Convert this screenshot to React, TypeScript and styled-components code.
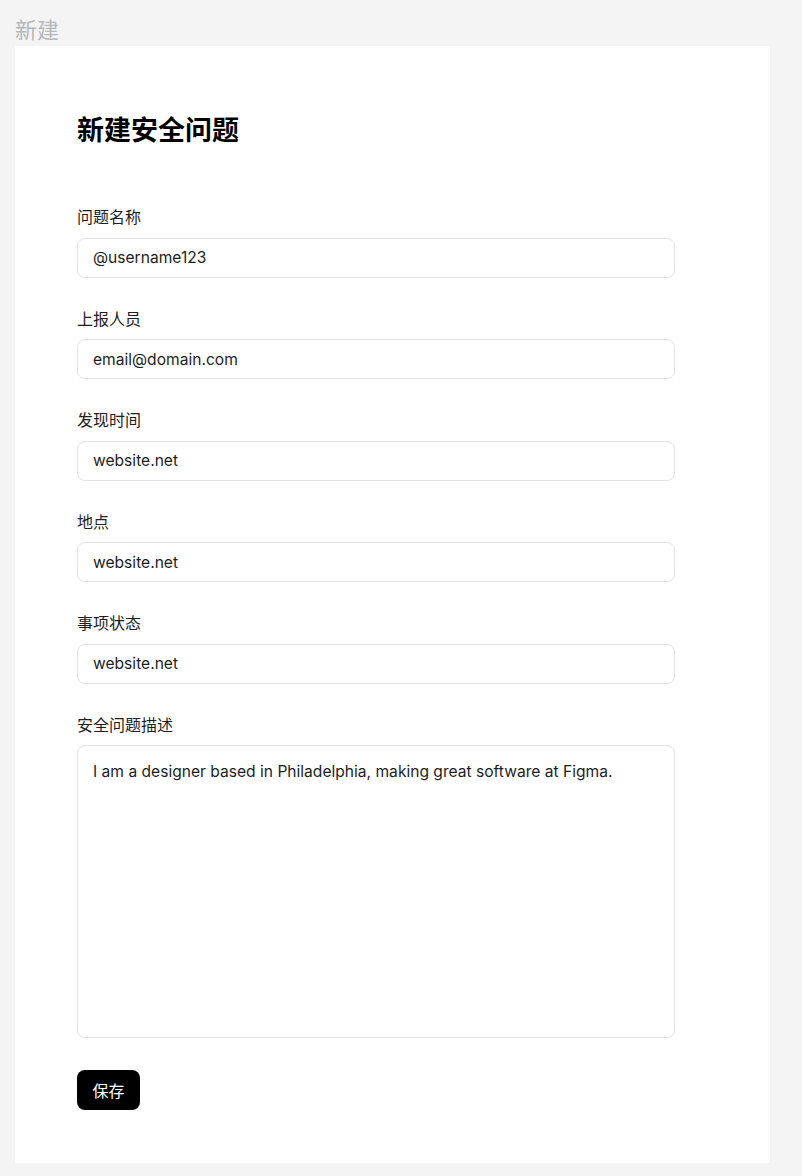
import React from "react";
import styled, { createGlobalStyle } from "styled-components";

const GlobalStyle = createGlobalStyle`
  html, body {
    margin: 0;
    padding: 0;
    background: #f4f4f4;
  }
  body {
    font-family: Inter, "Noto Sans CJK SC", sans-serif;
    color: #1e1e1e;
  }
  * {
    box-sizing: border-box;
  }
`;

const Page = styled.div`
  padding: 16px 32px 13px 15px;
  min-height: 1176px;
`;

const PageTitle = styled.div`
  font-size: 22px;
  line-height: 28px;
  color: #b8b8b8;
  margin-bottom: 2px;
`;

const Card = styled.form`
  background: #ffffff;
  padding: 67px 95px 53px 62px;
  display: flex;
  flex-direction: column;
`;

const Heading = styled.h1`
  margin: 0 0 59px;
  font-size: 27px;
  line-height: 36px;
  font-weight: 700;
  color: #000000;
`;

const Fields = styled.div`
  display: flex;
  flex-direction: column;
  gap: 32px;
`;

const Field = styled.label`
  display: flex;
  flex-direction: column;
  gap: 10px;
`;

const Label = styled.span`
  font-size: 16px;
  line-height: 19.5px;
  color: #1e1e1e;
`;

const TextInput = styled.input`
  display: block;
  height: 40px;
  width: 100%;
  padding: 0 15px;
  border: 1px solid #e3e3e3;
  border-radius: 8px;
  font-family: inherit;
  font-size: 15.6px;
  color: #1e1e1e;
  background: #ffffff;
  outline: none;
`;

const TextArea = styled.textarea`
  display: block;
  height: 293px;
  width: 100%;
  padding: 15px 15px;
  border: 1px solid #e3e3e3;
  border-radius: 8px;
  font-family: inherit;
  font-size: 15.6px;
  line-height: 22px;
  color: #1e1e1e;
  background: #ffffff;
  resize: none;
  outline: none;
`;

const SaveButton = styled.button`
  align-self: flex-start;
  margin-top: 32px;
  height: 40px;
  width: 63px;
  padding: 0;
  border: none;
  border-radius: 8px;
  background: #000000;
  color: #ffffff;
  font-family: inherit;
  font-size: 16px;
  cursor: pointer;
`;

const FIELDS = [
  { label: "问题名称", value: "@username123" },
  { label: "上报人员", value: "email@domain.com" },
  { label: "发现时间", value: "website.net" },
  { label: "地点", value: "website.net" },
  { label: "事项状态", value: "website.net" },
];

const App = () => {
  return (
    <>
      <GlobalStyle />
      <Page>
        <PageTitle>新建</PageTitle>
        <Card onSubmit={(e) => e.preventDefault()}>
          <Heading>新建安全问题</Heading>
          <Fields>
            {FIELDS.map((f) => (
              <Field key={f.label}>
                <Label>{f.label}</Label>
                <TextInput defaultValue={f.value} />
              </Field>
            ))}
            <Field>
              <Label>安全问题描述</Label>
              <TextArea defaultValue="I am a designer based in Philadelphia, making great software at Figma." />
            </Field>
          </Fields>
          <SaveButton type="submit">保存</SaveButton>
        </Card>
      </Page>
    </>
  );
};

export default App;
